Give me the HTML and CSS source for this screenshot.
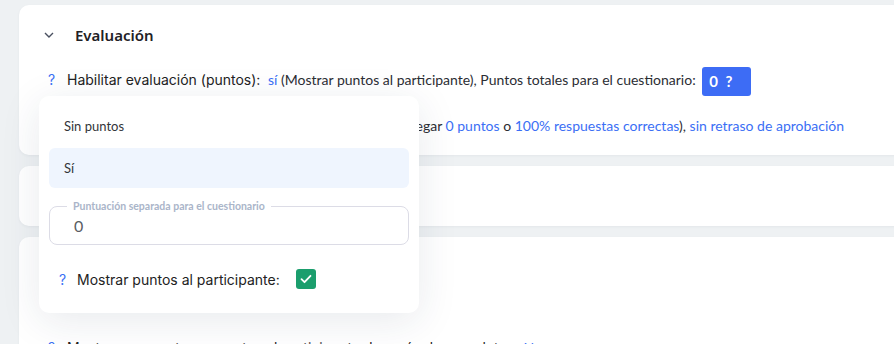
FILE: index.html
```html
<!DOCTYPE html>
<html lang="es">
<head>
    <meta charset="UTF-8">
    <title>Evaluación</title>
    <link rel="stylesheet" href="styles.css">
</head>
<body>
    <div class="page">
        <!-- Sección Evaluación -->
        <section class="card card-eval">
            <div class="card-head">
                <svg class="chevron" width="10" height="6" viewBox="0 0 10 6"><path d="M1 1l4 4 4-4" fill="none" stroke="#4a5060" stroke-width="1.4"/></svg>
                <h3>Evaluación</h3>
            </div>
            <div class="line">
                <span class="help">?</span><span class="label">Habilitar evaluación (puntos):</span>
                <a href="#" class="link">sí</a> (Mostrar puntos al participante), Puntos totales para el cuestionario:
                <span class="badge">0 <span class="badge-q">?</span></span>
            </div>
            <div class="line line-second">
                <span class="help">?</span><span class="label">Aprobación del cuestionario:</span>
                sí, automáticamente (al llegar <a href="#" class="link">0 puntos</a> o <a href="#" class="link">100% respuestas correctas</a>), <a href="#" class="link">sin retraso de aprobación</a>
            </div>
        </section>

        <section class="card card-small">
            <div class="card-head">
                <svg class="chevron" width="10" height="6" viewBox="0 0 10 6"><path d="M1 1l4 4 4-4" fill="none" stroke="#4a5060" stroke-width="1.4"/></svg>
                <h3>Certificado</h3>
            </div>
        </section>

        <section class="card card-last">
            <div class="card-head">
                <svg class="chevron" width="10" height="6" viewBox="0 0 10 6"><path d="M1 1l4 4 4-4" fill="none" stroke="#4a5060" stroke-width="1.4"/></svg>
                <h3>Resultados</h3>
            </div>
            <div class="line line-hidden">
                <span class="help">?</span><span class="label">Mostrar resultado al participante:</span>
                <a href="#" class="link">sí</a>
            </div>
            <div class="line line-bottom">
                <span class="help">?</span><span class="label">Mostrar respuestas correctas al participante después de completar:</span>
                <a href="#" class="link">No mostrar</a>
            </div>
        </section>

        <!-- Menú desplegable de puntos -->
        <div class="dropdown">
            <div class="option">Sin puntos</div>
            <div class="option active">Sí</div>
            <fieldset class="score-field">
                <legend>Puntuación separada para el cuestionario</legend>
                <div class="score-value">0</div>
            </fieldset>
            <div class="check-row">
                <span class="help">?</span>
                <span class="check-label">Mostrar puntos al participante:</span>
                <span class="checkbox">
                    <svg width="12" height="10" viewBox="0 0 12 10"><path d="M1.5 5.2l3 3 6-6.4" fill="none" stroke="#fff" stroke-width="1.8" stroke-linecap="round" stroke-linejoin="round"/></svg>
                </span>
            </div>
        </div>
    </div>
</body>
</html>
```

FILE: styles.css
```css
* {
    margin: 0;
    padding: 0;
    box-sizing: border-box;
}

body {
    background: #eef1f3;
    font-family: 'Lato', sans-serif;
    color: #2b2d33;
    overflow: hidden;
}

.page {
    position: relative;
    padding: 5px 0 0 19px;
    height: 344px;
    overflow: hidden;
}

/* Tarjetas */
.card {
    background: #fff;
    border-radius: 10px;
    margin-right: -30px;
    margin-bottom: 11px;
    padding: 16px 0 0 29px;
    box-shadow: 0 1px 3px rgba(40, 60, 80, 0.05);
}

.card-eval {
    height: 150px;
}

.card-small {
    height: 60px;
}

.card-last {
    height: 140px;
}

.card-head {
    display: flex;
    align-items: center;
    height: 28px;
}

.chevron {
    margin-left: -4px;
    margin-right: 21px;
}

.card-head h3 {
    font-family: 'Noto Sans', sans-serif;
    font-size: 15px;
    font-weight: 600;
    color: #1f2126;
}

.line {
    height: 30px;
    line-height: 30px;
    margin-top: 16px;
    font-size: 14px;
    white-space: nowrap;
}

.line-second {
    height: 22px;
    line-height: 22px;
    margin-top: 20px;
}

.line-hidden {
    height: 22px;
    line-height: 22px;
    margin-top: 12px;
}

.line-bottom {
    height: 22px;
    line-height: 22px;
    margin-top: 22px;
}

.help {
    display: inline-block;
    color: #3b6ff5;
    width: 19px;
    font-family: 'Inter', sans-serif;
    font-size: 14px;
}

.label {
    font-family: 'Inter', sans-serif;
    font-size: 14px;
    color: #222;
    margin-right: 4px;
}

.link {
    color: #3b6ff5;
    text-decoration: none;
}

.badge {
    display: inline-block;
    vertical-align: middle;
    background: #3d6cf5;
    color: #fff;
    font-weight: 700;
    font-size: 15px;
    height: 29px;
    line-height: 29px;
    width: 49px;
    padding-left: 7px;
    margin-left: 3px;
    border-radius: 3px;
}

.badge-q {
    margin-left: 4px;
}

/* Dropdown */
.dropdown {
    position: absolute;
    left: 39px;
    top: 96px;
    width: 380px;
    height: 217px;
    background: #fff;
    border-radius: 10px;
    padding: 10px;
    box-shadow: 0 8px 40px rgba(30, 50, 80, 0.1);
}

.option {
    height: 40px;
    line-height: 40px;
    padding-left: 15px;
    font-size: 13px;
    color: #333539;
    border-radius: 6px;
    margin-bottom: 2px;
}

.option.active {
    background: #eff5fe;
}

.score-field {
    margin-top: 12px;
    border: 1px solid #dcdce6;
    border-radius: 8px;
    padding: 0 0 0 17px;
    height: 45px;
}

.score-field legend {
    font-size: 10.5px;
    font-weight: 700;
    color: #aab5c9;
    padding: 0 6px;
    line-height: 12px;
}

.score-value {
    font-size: 16px;
    color: #5a5d63;
    padding-left: 7px;
    line-height: 28px;
}

.check-row {
    display: flex;
    align-items: center;
    height: 20px;
    margin-top: 24px;
    padding-left: 10px;
}

.check-row .help {
    width: 18px;
}

.check-label {
    font-family: 'Inter', sans-serif;
    font-size: 14px;
    color: #222;
    margin-right: 16px;
}

.checkbox {
    display: inline-flex;
    align-items: center;
    justify-content: center;
    width: 20px;
    height: 20px;
    background: #1b9e6d;
    border-radius: 3px;
}
```
